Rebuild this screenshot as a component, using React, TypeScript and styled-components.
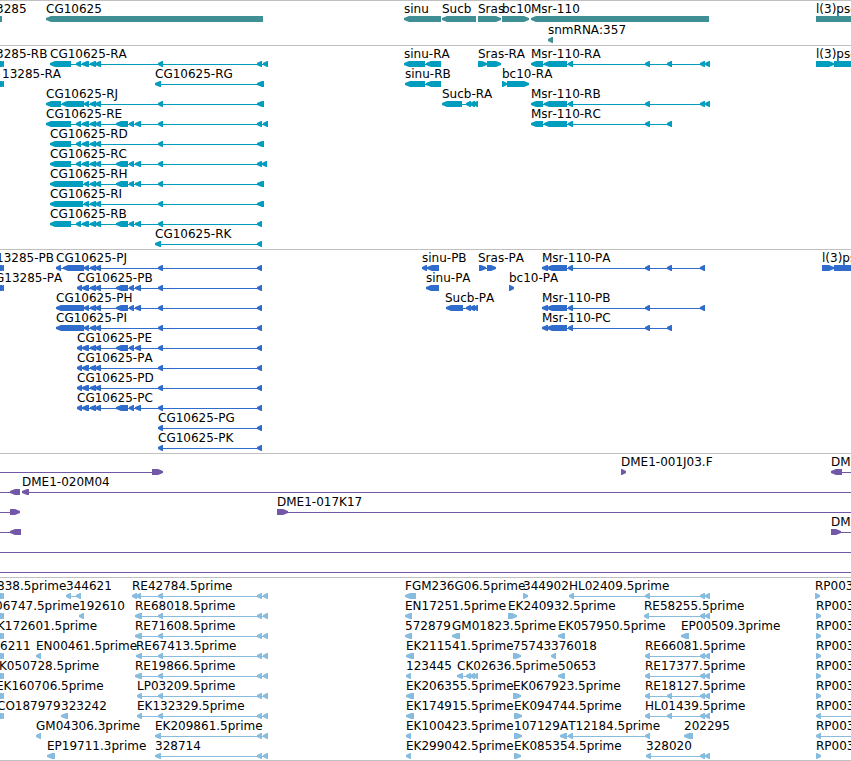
import React from "react";
import styled, { createGlobalStyle } from "styled-components";

type Span = [number, number];
type Feature = {
  label?: string;
  /** left edge of the label, when it differs from the first exon */
  at?: number;
  dir: "L" | "R";
  exons: Span[];
  /** the intron line runs past the visible window on this side */
  from?: number;
  to?: number;
};
type TrackData = { color: string; rowHeight: number; gap: number; rows: Feature[][] };

const FAR = 8000;
const HEAD = 5;
const BAR = 6;

const L = (label: string, exons: Span[], at?: number): Feature => ({ label, exons, at, dir: "L" });
const R = (label: string, exons: Span[], at?: number): Feature => ({ label, exons, at, dir: "R" });

const edge: Span[] = [[-6, 2], [0, 4]];
const mid: Span[] = [[90, 96], [95, 101]];
const lead: Span[] = [[76, 81], [82, 89], ...mid];
const trio: Span[] = [[116, 128], [129, 134], [135, 141]];
const far: Span[] = [[158, 163]];
const end: Span[] = [[257, 262]];
const endWide: Span[] = [[257, 264]];
const endPair: Span[] = [[257, 262], [263, 268]];
const sucbTail: Span[] = [[466, 471], [470, 475], [474, 478]];
const msrHead: Span[] = [[531, 543], [544, 567], [568, 573], [645, 650]];
const msrCds: Span[] = [[542, 548], [547, 567], [568, 573], [645, 650]];
const msrEnd: Span[] = [[700, 705], [705, 710]];
const coding: Span[] = [[77, 82], [82, 89], ...mid];

const genes: Feature[][] = [
  [
    L("3285", [[-20, 2]], -4),
    L("CG10625", [[46, 263]]),
    L("sinu", [[404, 441]]),
    L("Sucb", [[442, 476]]),
    R("Sras", [[478, 501]]),
    R("bc10", [[502, 529]]),
    L("Msr-110", [[531, 709]]),
    R("l(3)psg", [[816, FAR]]),
  ],
  [L("snmRNA:357", [[548, 553]])],
];

const transcripts: Feature[][] = [
  [
    L("3285-RB", edge, -4),
    L("CG10625-RA", [[50, 71], ...lead, ...far, ...endPair]),
    L("sinu-RA", [[404, 425], [426, 441]]),
    R("Sras-RA", [[478, 487], [487, 501]]),
    L("Msr-110-RA", [...msrHead, [667, 672], ...msrEnd]),
    R("l(3)psg", [[816, 834], [834, FAR]]),
  ],
  [
    L("13285-RA", edge, 2),
    L("CG10625-RG", [[155, 161], ...endWide]),
    L("sinu-RB", [[405, 425], [426, 441]]),
    R("bc10-RA", [[502, 507], [507, 529]]),
  ],
  [
    L("CG10625-RJ", [[46, 61], [62, 84], [84, 89], ...mid, ...far, ...endWide]),
    L("Sucb-RA", [[442, 462], ...sucbTail]),
    L("Msr-110-RB", [...msrHead, ...msrEnd]),
  ],
  [
    L("CG10625-RE", [[46, 71], ...lead, ...trio, ...far, ...endPair]),
    L("Msr-110-RC", [...msrHead, [667, 672]]),
  ],
  [L("CG10625-RD", [[50, 71], ...lead, ...far, ...endWide])],
  [L("CG10625-RC", [[50, 71], ...lead, ...trio, ...far, [257, 262], [262, 267]])],
  [L("CG10625-RH", [[50, 83], [84, 89], ...mid, ...trio, ...far, ...endWide])],
  [L("CG10625-RI", [[50, 83], [84, 89], ...mid, ...far, ...endWide])],
  [L("CG10625-RB", [[50, 71], ...lead, ...trio, ...far, ...end])],
  [L("CG10625-RK", [[155, 161], ...end])],
];

const proteins: Feature[][] = [
  [
    L("13285-PB", edge, -4),
    L("CG10625-PJ", [[56, 61], [63, 84], [84, 89], ...mid, ...far, ...end]),
    L("sinu-PB", [[422, 427], [427, 439]]),
    R("Sras-PA", [[479, 486], [487, 496]], 478),
    L("Msr-110-PA", [...msrCds, [667, 672], [700, 705]]),
    R("l(3)psg", [[822, 834], [834, FAR]]),
  ],
  [
    L("G13285-PA", edge, -5),
    L("CG10625-PB", [...coding, ...trio, ...far, ...end]),
    L("sinu-PA", [[426, 439]]),
    R("bc10-PA", [[509, 514]]),
  ],
  [
    L("CG10625-PH", [[56, 84], [84, 89], ...mid, ...trio, ...far, ...end]),
    L("Sucb-PA", [[446, 463], ...sucbTail], 445),
    L("Msr-110-PB", [...msrCds, [700, 705]]),
  ],
  [
    L("CG10625-PI", [[56, 84], [84, 89], ...mid, ...far, ...end]),
    L("Msr-110-PC", [...msrCds, [667, 672]]),
  ],
  [L("CG10625-PE", [...coding, ...trio, ...far, ...end])],
  [L("CG10625-PA", [...coding, ...far, ...end])],
  [L("CG10625-PD", [...coding, ...far, ...end])],
  [L("CG10625-PC", [...coding, ...trio, ...far, ...end])],
  [L("CG10625-PG", [...far, ...end])],
  [L("CG10625-PK", [...far, ...end])],
];

const clones: Feature[][] = [
  [
    { dir: "R", exons: [[152, 163]], from: -10 },
    R("DME1-001J03.F", [[621, 626]]),
    { label: "DM", dir: "L", exons: [[831, 842]], to: FAR },
  ],
  [
    { dir: "L", exons: [[10, 20]], from: -10 },
    { label: "DME1-020M04", dir: "L", exons: [[22, 29]], to: FAR },
  ],
  [
    { dir: "R", exons: [[10, 20]], from: -10 },
    { label: "DME1-017K17", dir: "R", exons: [[277, 288]], to: FAR },
  ],
  [
    { dir: "L", exons: [[10, 21]], from: -10 },
    { label: "DM", dir: "R", exons: [[831, 841]], to: FAR },
  ],
  [{ dir: "R", exons: [], from: -10, to: FAR }],
  [{ dir: "R", exons: [], from: -10, to: FAR }],
];

const ests: Feature[][] = [
  [
    L("838.5prime", edge, -3),
    L("344621", [[66, 71], [76, 81]]),
    L("RE42784.5prime", [[132, 137], [136, 141], ...far, ...endPair]),
    L("FGM236G06.5prime", [[405, 416]]),
    R("344902", [[523, 528]]),
    L("HL02409.5prime", [[569, 574], [645, 650], ...msrEnd]),
    R("RP003", [[815, 820]]),
  ],
  [
    L("06747.5prime", edge, -5),
    L("192610", [[79, 84]]),
    L("RE68018.5prime", [[135, 142], ...far, ...endPair]),
    L("EN17251.5prime", [[405, 412]]),
    R("EK240932.5prime", [[508, 517]]),
    L("RE58255.5prime", [[644, 649], ...msrEnd]),
    R("RP003", [[816, 821]]),
  ],
  [
    L("K172601.5prime", edge, -3),
    L("RE71608.5prime", [[135, 142], ...far, ...endPair]),
    L("572879", [[405, 412]]),
    L("GM01823.5prime", [[452, 460]]),
    L("EK057950.5prime", [[558, 565]]),
    L("EP00509.3prime", [[681, 689]]),
    R("RP003", [[816, 821]]),
  ],
  [
    L("6211", edge, 0),
    L("EN00461.5prime", [[36, 41]]),
    L("RE67413.5prime", [[136, 142], ...far, ...endPair]),
    L("EK211541.5prime", [[406, 414]]),
    R("75743", [[513, 521]]),
    L("376018", [[551, 556]]),
    L("RE66081.5prime", [[645, 650], ...msrEnd]),
    R("RP003", [[816, 821]]),
  ],
  [
    L("K050728.5prime", edge, -1),
    L("RE19866.5prime", [[135, 142], ...far, ...endPair]),
    L("123445", [[406, 411]]),
    L("CK02636.5prime", [[457, 463], ...sucbTail]),
    L("50653", [[558, 565]]),
    L("RE17377.5prime", [[645, 650], ...msrEnd]),
    R("RP003", [[816, 821]]),
  ],
  [
    L("EK160706.5prime", edge, -4),
    L("LP03209.5prime", [[137, 142], ...far, ...endPair]),
    L("EK206355.5prime", [[406, 414]]),
    R("EK067923.5prime", [[513, 521]]),
    L("RE18127.5prime", [[645, 650], [667, 672], ...msrEnd]),
    R("RP003", [[816, 821]]),
  ],
  [
    L("CO187979", edge, -3),
    L("323242", [[61, 68]]),
    L("EK132329.5prime", [[137, 142], ...far, ...endPair]),
    L("EK174915.5prime", [[406, 414]]),
    R("EK094744.5prime", [[514, 522]]),
    L("HL01439.5prime", [[645, 650], [667, 672], ...msrEnd]),
    { label: "RP003", dir: "L", exons: [[816, 821]], to: FAR },
  ],
  [
    L("GM04306.3prime", [[36, 41]]),
    L("EK209861.5prime", [[155, 161], ...endPair]),
    L("EK100423.5prime", [[406, 411]]),
    R("107129", [[514, 522]]),
    L("AT12184.5prime", [[560, 567], [568, 573], [645, 650]]),
    L("202295", [[684, 693]]),
    { label: "RP003", dir: "L", exons: [[816, 821]], to: FAR },
  ],
  [
    L("EP19711.3prime", [[47, 55]]),
    L("328714", [[155, 161], ...endPair]),
    L("EK299042.5prime", [[406, 411]]),
    R("EK085354.5prime", [[514, 521]]),
    L("328020", [[646, 651], ...msrEnd]),
    R("RP003", [[816, 821]]),
  ],
];

const tracks: TrackData[] = [
  { color: "#3f8f94", rowHeight: 21, gap: 2, rows: genes },
  { color: "#009dbf", rowHeight: 20, gap: 3, rows: transcripts },
  { color: "#306ccc", rowHeight: 20, gap: 3, rows: proteins },
  { color: "#7458a8", rowHeight: 20, gap: 3, rows: clones },
  { color: "#87bcde", rowHeight: 20, gap: 2, rows: ests },
];

const GlobalStyle = createGlobalStyle`
  body {
    margin: 0;
    background: #ffffff;
  }
`;

const Browser = styled.main`
  border-bottom: 1px solid #c0c0c0;
  overflow: hidden;
  font-family: "DejaVu Sans", Verdana, sans-serif;
  font-size: 12px;
  line-height: 17px;
  font-kerning: none;
  color: #000000;
`;

const Track = styled.section<{ $color: string; $gap: number }>`
  border-top: 1px solid #c0c0c0;
  padding-bottom: ${(p) => p.$gap}px;
  color: ${(p) => p.$color};
`;

const Row = styled.div<{ $height: number }>`
  height: ${(p) => p.$height}px;
`;

const LabelLane = styled.div`
  position: relative;
  height: 15px;
  color: #000000;
`;

const Label = styled.span`
  position: absolute;
  top: 0;
  white-space: nowrap;
`;

const GlyphLane = styled.svg`
  display: block;
  width: 100%;
  height: 6px;
  overflow: visible;
  fill: currentColor;
`;

function exonPath([a, b]: Span, dir: "L" | "R") {
  const head = Math.min(HEAD, b - a - 1);
  return dir === "L"
    ? `M${a} 2L${a + head} 0H${b}V${BAR}H${a + head}L${a} 4Z`
    : `M${b} 2L${b - head} 0H${a}V${BAR}H${b - head}L${b} 4Z`;
}

function Glyph({ feature }: { feature: Feature }) {
  const { exons, dir } = feature;
  const from = feature.from ?? exons[0][0] + 2;
  const to = feature.to ?? exons[exons.length - 1][1] - 2;
  return (
    <g>
      {to > from && <path d={`M${from} 3H${to}V4H${from}Z`} />}
      {exons.map((e, i) => (
        <path key={i} d={exonPath(e, dir)} />
      ))}
    </g>
  );
}

export default function App() {
  return (
    <>
      <GlobalStyle />
      <Browser>
        {tracks.map((t, i) => (
          <Track key={i} $color={t.color} $gap={t.gap}>
            {t.rows.map((row, r) => (
              <Row key={r} $height={t.rowHeight}>
                <LabelLane>
                  {row.map(
                    (f, k) =>
                      f.label && (
                        <Label key={k} style={{ left: f.at ?? f.exons[0][0] }}>
                          {f.label}
                        </Label>
                      )
                  )}
                </LabelLane>
                <GlyphLane>
                  {row.map((f, k) => (
                    <Glyph key={k} feature={f} />
                  ))}
                </GlyphLane>
              </Row>
            ))}
          </Track>
        ))}
      </Browser>
    </>
  );
}
